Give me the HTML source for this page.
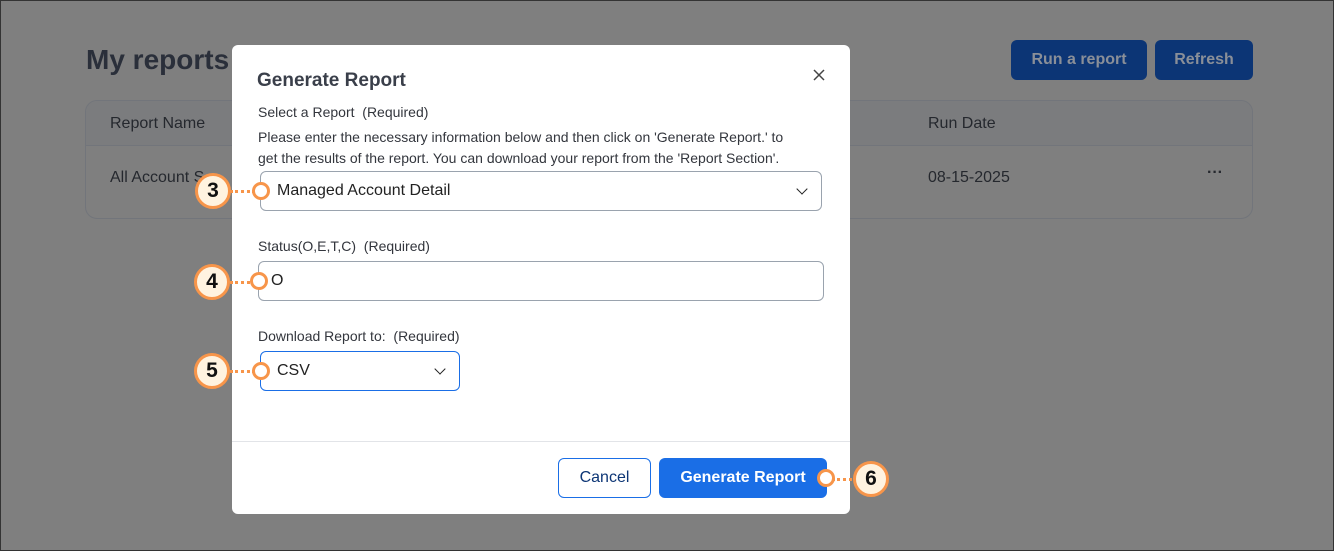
<!DOCTYPE html>
<html><head><style>
*{box-sizing:border-box;margin:0;padding:0}
body{width:1334px;height:551px;background:#7f7f7f;font-family:"Liberation Sans",sans-serif;position:relative;overflow:hidden}
.frame{position:absolute;left:0;top:0;width:1334px;height:551px;border:1px solid #333;z-index:5}
.a{position:absolute}
.h1{left:86px;top:44px;font-size:28px;font-weight:bold;color:#2a2f3a}
.btn{background:#0c3575;color:#8a8f98;font-weight:bold;font-size:16px;border-radius:6px;text-align:center;line-height:40px;height:40px;top:40px}
.tbl{left:85px;top:100px;width:1168px;height:119px;border:1px solid #72757b;border-radius:12px;overflow:hidden}
.th{height:45px;background:#7b7c7e;border-bottom:1px solid #72757b}
.t{font-size:16px;color:#25282e}
.modal{left:232px;top:45px;width:618px;height:469px;background:#fff;border-radius:6px}
.lbl{font-size:14px;color:#33363d}
.box{border:1px solid #9aa3ae;border-radius:6px;background:#fff}
.big{width:36px;height:36px;border-radius:50%;background:#fff3e0;border:3px solid #f7954a;font-size:21px;font-weight:bold;color:#111;text-align:center;line-height:30px}
.sm{width:18px;height:18px;border-radius:50%;background:#fff;border:3px solid #f7954a}
.dot{height:0;border-top:3px dotted #f7954a}
.chev{width:8px;height:8px;border-right:1.6px solid #222;border-bottom:1.6px solid #222;transform:rotate(45deg)}
</style></head><body>
<div class="frame"></div>
<div class="a h1">My reports</div>
<div class="a btn" style="left:1011px;width:136px">Run a report</div>
<div class="a btn" style="left:1155px;width:98px">Refresh</div>
<div class="a tbl"><div class="th"></div></div>
<div class="a t" style="left:110px;top:115px">Report Name</div>
<div class="a t" style="left:928px;top:115px">Run Date</div>
<div class="a t" style="left:110px;top:169px">All Account S</div>
<div class="a t" style="left:928px;top:169px">08-15-2025</div>
<div class="a t" style="left:1207px;top:164px;font-weight:bold">···</div>

<div class="a modal"></div>
<div class="a" style="left:257px;top:70px;font-size:19px;font-weight:bold;color:#3a3f4a">Generate Report</div>
<svg class="a" style="left:812px;top:68px" width="14" height="14"><path d="M2 2L12 12M12 2L2 12" stroke="#444" stroke-width="1.5"/></svg>
<div class="a lbl" style="left:258px;top:104px">Select a Report&nbsp; (Required)</div>
<div class="a lbl" style="left:258px;top:127px;width:548px;line-height:21px">Please enter the necessary information below and then click on 'Generate Report.' to get the results of the report. You can download your report from the 'Report Section'.</div>
<div class="a box" style="left:260px;top:171px;width:562px;height:40px"></div>
<div class="a" style="left:277px;top:182px;font-size:16px;color:#222">Managed Account Detail</div>
<div class="a chev" style="left:798px;top:185px"></div>

<div class="a lbl" style="left:258px;top:238px">Status(O,E,T,C)&nbsp; (Required)</div>
<div class="a box" style="left:258px;top:261px;width:566px;height:40px"></div>
<div class="a" style="left:271px;top:272px;font-size:16px;color:#222">O</div>

<div class="a lbl" style="left:258px;top:328px">Download Report to:&nbsp; (Required)</div>
<div class="a box" style="left:260px;top:351px;width:200px;height:40px;border-color:#1a6ee6"></div>
<div class="a" style="left:277px;top:362px;font-size:16px;color:#222">CSV</div>
<div class="a chev" style="left:436px;top:365px"></div>

<div class="a" style="left:232px;top:441px;width:618px;height:1px;background:#e2e4e8"></div>
<div class="a" style="left:558px;top:458px;width:93px;height:40px;border:1px solid #1a6ee6;border-radius:6px;text-align:center;line-height:38px;font-size:16px;color:#0c3575">Cancel</div>
<div class="a" style="left:659px;top:458px;width:168px;height:40px;background:#1a6ee6;border-radius:6px;text-align:center;line-height:40px;font-size:16px;font-weight:bold;color:#fff">Generate Report</div>

<div class="a dot" style="left:230px;top:190px;width:25px"></div>
<div class="a big" style="left:195px;top:173px">3</div>
<div class="a sm" style="left:252px;top:182px"></div>
<div class="a dot" style="left:230px;top:281px;width:25px"></div>
<div class="a big" style="left:194px;top:264px">4</div>
<div class="a sm" style="left:250px;top:272px"></div>
<div class="a dot" style="left:230px;top:370px;width:25px"></div>
<div class="a big" style="left:194px;top:353px">5</div>
<div class="a sm" style="left:252px;top:362px"></div>
<div class="a dot" style="left:832px;top:478px;width:25px"></div>
<div class="a sm" style="left:817px;top:469px"></div>
<div class="a big" style="left:853px;top:461px">6</div>
</body></html>
